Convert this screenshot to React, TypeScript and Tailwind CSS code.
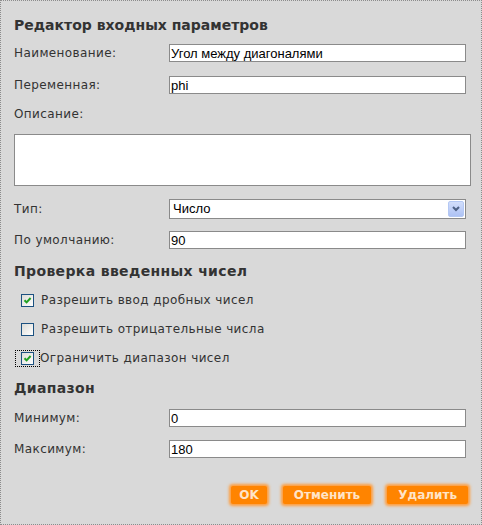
import React from "react";

const LABEL = "font-['DejaVu_Sans',Verdana,sans-serif] text-[12px] tracking-[0.4px] text-[#333]";
const HEAD = "font-['DejaVu_Sans',Verdana,sans-serif] text-[14px] font-bold leading-[18px] text-[#333]";
const FIELD =
  "h-[18px] w-[297px] border border-[#8a8a8a] bg-white px-[1px] font-['Liberation_Sans',Arial,sans-serif] text-[13px] leading-[16px] text-black outline-none";

function Row({ label, children, className = "" }: { label: string; children: React.ReactNode; className?: string }) {
  return (
    <div className={`flex items-center ${className}`}>
      <span className={`w-[155px] ${LABEL}`}>{label}</span>
      {children}
    </div>
  );
}

function Check({ checked }: { checked: boolean }) {
  return (
    <span className="flex h-[13px] w-[13px] shrink-0 items-center justify-center border border-[#1c5180] bg-gradient-to-br from-[#dcdcd7] to-white">
      {checked && (
        <svg width="9" height="9" viewBox="0 0 9 9">
          <path d="M1.5 4.2 L3.6 6.4 L7.6 2" fill="none" stroke="#21a121" strokeWidth="2" />
        </svg>
      )}
    </span>
  );
}

function CheckRow({ label, checked, focused = false, className = "" }: { label: string; checked: boolean; focused?: boolean; className?: string }) {
  return (
    <div className={`flex h-[16px] items-center pl-[7px] ${className}`}>
      {focused ? (
        <span className="-ml-[6px] flex items-center border border-dotted border-black px-[5px] py-[1px]">
          <Check checked={checked} />
        </span>
      ) : (
        <span className="flex w-[20px]">
          <Check checked={checked} />
        </span>
      )}
      <span className={LABEL}>{label}</span>
    </div>
  );
}

function Btn({ children, pad = "px-[10px]" }: { children: React.ReactNode; pad?: string }) {
  return (
    <button className={`h-[18px] rounded-[2px] bg-[#ff8400] ${pad} font-['DejaVu_Sans',Verdana,sans-serif] text-[12px] font-bold leading-[18px] text-[#ffe4c8] shadow-[0_0_3px_2px_#ff9c3a]`}>
      {children}
    </button>
  );
}

export default function App() {
  return (
    <div className="flex h-[525px] w-[482px] flex-col border border-dotted border-[#8c8c8c] bg-[#d9d9d9] px-[13px] pt-[15px]">
      <div className={HEAD}>Редактор входных параметров</div>

      <Row label="Наименование:" className="mt-[10px]">
        <input className={FIELD} defaultValue="Угол между диагоналями" />
      </Row>
      <Row label="Переменная:" className="mt-[14px]">
        <input className={FIELD} defaultValue="phi" />
      </Row>

      <div className={`mt-[12px] h-[16px] leading-[16px] ${LABEL}`}>Описание:</div>
      <textarea className="mt-[12px] h-[52px] w-[457px] resize-none border border-[#8a8a8a] bg-white outline-none" />

      <Row label="Тип:" className="mt-[13px]">
        <div className="flex h-[20px] w-[297px] items-center justify-between border border-[#8a8a8a] bg-white pl-[3px] pr-[1px]">
          <span className="font-['Liberation_Sans',Arial,sans-serif] text-[13px] text-black">Число</span>
          <span className="flex h-[16px] w-[16px] items-center justify-center rounded-[2px] border border-[#b4c8f4] bg-gradient-to-b from-[#d2defb] to-[#aec2f4]">
            <svg width="8" height="6" viewBox="0 0 8 6">
              <path d="M1 1 L4 4 L7 1" fill="none" stroke="#4d6185" strokeWidth="2" />
            </svg>
          </span>
        </div>
      </Row>
      <Row label="По умолчанию:" className="mt-[12px]">
        <input className={FIELD} defaultValue="90" />
      </Row>

      <div className={`mt-[13px] tracking-[0.35px] ${HEAD}`}>Проверка введенных чисел</div>
      <CheckRow label="Разрешить ввод дробных чисел" checked className="mt-[12px]" />
      <CheckRow label="Разрешить отрицательные числа" checked={false} className="mt-[13px]" />
      <CheckRow label="Ограничить диапазон чисел" checked focused className="mt-[13px]" />

      <div className={`mt-[13px] tracking-[0.35px] ${HEAD}`}>Диапазон</div>
      <Row label="Минимум:" className="mt-[12px]">
        <input className={FIELD} defaultValue="0" />
      </Row>
      <Row label="Максимум:" className="mt-[13px]">
        <input className={FIELD} defaultValue="180" />
      </Row>

      <div className="mt-[28px] flex justify-end gap-[16px]">
        <Btn pad="px-[8px]">OK</Btn>
        <Btn pad="px-[11px]">Отменить</Btn>
        <Btn pad="px-[11px]">Удалить</Btn>
      </div>
    </div>
  );
}
